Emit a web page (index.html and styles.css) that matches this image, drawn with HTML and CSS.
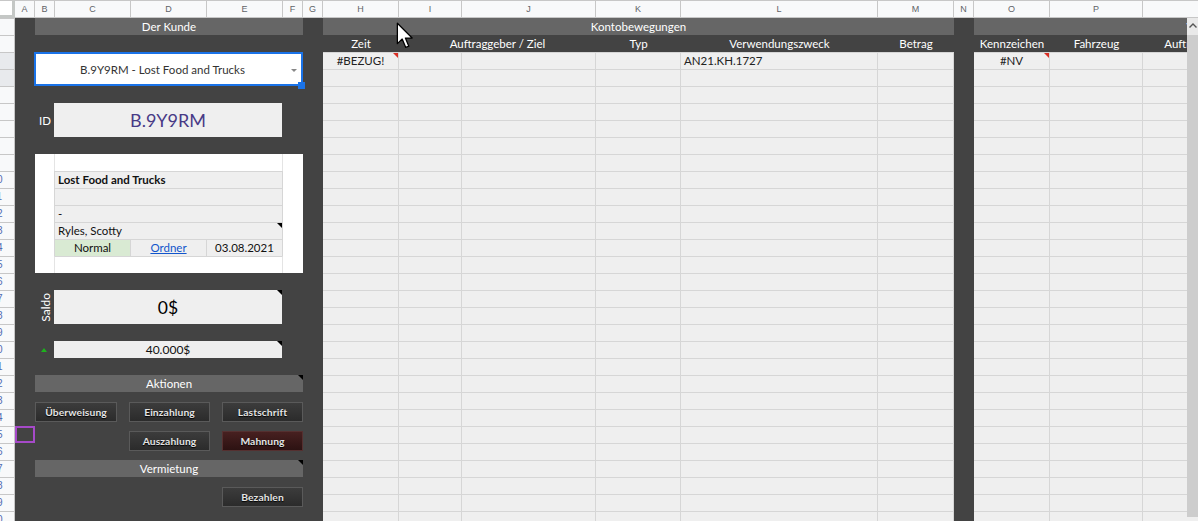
FILE: index.html
```html
<!DOCTYPE html>
<html lang="de">
<head>
    <meta charset="UTF-8">
    <meta name="viewport" content="width=device-width, initial-scale=1.0">
    <title>Kundenkonto</title>
    <link rel="stylesheet" href="styles.css">
</head>
<body>

<div class="sheet">
    <div class="corner"></div>

    <div class="colheads">
        <div class="ch w20">A</div>
        <div class="ch w20">B</div>
        <div class="ch w76">C</div>
        <div class="ch w76">D</div>
        <div class="ch w76">E</div>
        <div class="ch w20">F</div>
        <div class="ch w20">G</div>
        <div class="ch w76">H</div>
        <div class="ch w63">I</div>
        <div class="ch w134">J</div>
        <div class="ch w85">K</div>
        <div class="ch w197">L</div>
        <div class="ch w76">M</div>
        <div class="ch w20">N</div>
        <div class="ch w76">O</div>
        <div class="ch w93">P</div>
        <div class="ch w109"></div>
    </div>

    <div class="rowheads">
        <div class="rh"></div>
        <div class="rh"></div>
        <div class="rh sel"></div>
        <div class="rh sel"></div>
        <div class="rh"></div>
        <div class="rh"></div>
        <div class="rh"></div>
        <div class="rh"></div>
        <div class="rh"></div>
        <div class="rh"><span>10</span></div>
        <div class="rh"><span>11</span></div>
        <div class="rh"><span>12</span></div>
        <div class="rh"><span>13</span></div>
        <div class="rh"><span>14</span></div>
        <div class="rh"><span>15</span></div>
        <div class="rh"><span>16</span></div>
        <div class="rh"><span>17</span></div>
        <div class="rh"><span>18</span></div>
        <div class="rh"><span>19</span></div>
        <div class="rh"><span>20</span></div>
        <div class="rh"><span>21</span></div>
        <div class="rh"><span>22</span></div>
        <div class="rh"><span>23</span></div>
        <div class="rh"><span>24</span></div>
        <div class="rh"><span>25</span></div>
        <div class="rh"><span>26</span></div>
        <div class="rh"><span>27</span></div>
        <div class="rh"><span>28</span></div>
        <div class="rh"><span>29</span></div>
        <div class="rh"><span>30</span></div>
    </div>

    <div class="panel">
        <div class="bar bar-kunde">Der Kunde</div>

        <div class="picker">
            B.9Y9RM - Lost Food and Trucks
            <span class="picker-arrow"></span>
            <span class="handle"></span>
        </div>

        <div class="label label-id">ID</div>
        <div class="idbox">B.9Y9RM</div>

        <div class="card">
            <div class="card-gap"></div>
            <div class="card-row bold">Lost Food and Trucks</div>
            <div class="card-row"></div>
            <div class="card-row">-</div>
            <div class="card-row note">Ryles, Scotty</div>
            <div class="card-cell first status">Normal</div>
            <div class="card-cell"><a href="#">Ordner</a></div>
            <div class="card-cell">03.08.2021</div>
            <div class="card-gap last"></div>
        </div>

        <div class="label label-saldo"><span>Saldo</span></div>
        <div class="saldo note">0$</div>

        <div class="trend"></div>
        <div class="limit note">40.000$</div>

        <div class="bar bar-aktionen note">Aktionen</div>
        <div class="btn-row btn-row-1">
            <button class="btn wide">Überweisung</button>
            <button class="btn">Einzahlung</button>
            <button class="btn">Lastschrift</button>
        </div>
        <div class="peer-cursor"></div>
        <div class="btn-row btn-row-2">
            <button class="btn">Auszahlung</button>
            <button class="btn danger">Mahnung</button>
        </div>

        <div class="bar bar-miete note">Vermietung</div>
        <div class="btn-row btn-row-3">
            <button class="btn">Bezahlen</button>
        </div>
    </div>

    <section class="block moves">
        <div class="block-title">Kontobewegungen</div>
        <div class="head">Zeit</div>
        <div class="head span2">Auftraggeber / Ziel</div>
        <div class="head">Typ</div>
        <div class="head">Verwendungszweck</div>
        <div class="head">Betrag</div>
        <div class="cell center err">#BEZUG!</div>
        <div class="cell"></div>
        <div class="cell"></div>
        <div class="cell"></div>
        <div class="cell">AN21.KH.1727</div>
        <div class="cell"></div>
        <div class="fill"></div>
        <div class="fill"></div>
        <div class="fill"></div>
        <div class="fill"></div>
        <div class="fill"></div>
        <div class="fill"></div>
    </section>

    <div class="gutter"></div>

    <section class="block rentals">
        <div class="block-title">Vermietungen</div>
        <div class="head">Kennzeichen</div>
        <div class="head">Fahrzeug</div>
        <div class="head">Auftraggeber</div>
        <div class="head">Beginn</div>
        <div class="head">Ende</div>
        <div class="cell center err">#NV</div>
        <div class="cell"></div>
        <div class="cell"></div>
        <div class="cell"></div>
        <div class="cell"></div>
        <div class="fill"></div>
        <div class="fill"></div>
        <div class="fill"></div>
        <div class="fill"></div>
        <div class="fill"></div>
    </section>
</div>

<div class="scrollbar">
    <span class="scroll-up">
        <svg width="11" height="17" viewBox="0 0 11 17"><path d="M2.5 9.5 L6 6 L9.5 9.5" fill="none" stroke="#555" stroke-width="1.4"/></svg>
    </span>
</div>

<svg class="pointer" width="18" height="28" viewBox="0 0 14 22">
    <path d="M1 1 L1 17 L4.8 13.4 L7.6 20 L10 19 L7.3 12.6 L12.6 12.6 Z" fill="#fff" stroke="#000" stroke-width="1" stroke-linejoin="round"/>
</svg>

</body>
</html>
```

FILE: styles.css
```css
* {
    box-sizing: border-box;
}

body {
    margin: 0;
    width: 1198px;
    height: 521px;
    overflow: hidden;
    position: relative;
    background-color: #fff;
    font-family: 'Lato', 'Open Sans', sans-serif;
    color: #222;
}

.sheet {
    display: grid;
    grid-template-columns: 15px 308px 631px 20px 496px;
    grid-template-rows: 18px 503px;
}

/* headers */

.corner {
    background-color: #fff;
    border-top: 1px solid #c7c7c7;
    border-right: 3px solid #c4c7c5;
    border-bottom: 3px solid #c4c7c5;
}

.colheads {
    display: flex;
    grid-column: 2 / -1;
}

.ch {
    flex: none;
    height: 18px;
    background-color: #f8f9fa;
    border-top: 1px solid #c7c7c7;
    border-right: 1px solid #c7c7c7;
    border-bottom: 1px solid #c7c7c7;
    font: 9px 'Liberation Sans', Arial, sans-serif;
    line-height: 16px;
    color: #5f6368;
    text-align: center;
}

.w20 { width: 20px; }
.w63 { width: 63px; }
.w76 { width: 76px; }
.w85 { width: 85px; }
.w93 { width: 93px; }
.w109 { width: 109px; }
.w134 { width: 134px; }
.w197 { width: 197px; }

.rowheads {
    display: flex;
    flex-direction: column;
    overflow: hidden;
}

.rh {
    flex: none;
    height: 17px;
    background-color: #f8f9fa;
    border-top: 1px solid #c7c7c7;
    border-right: 1px solid #c7c7c7;
    overflow: hidden;
}

.rh.sel {
    background-color: #e8eaed;
}

.rh span {
    display: block;
    width: 40px;
    margin-left: -23px;
    text-align: center;
    font: 10px 'Liberation Sans', Arial, sans-serif;
    line-height: 16px;
    color: #4f6bb3;
}

/* left panel */

.panel {
    background-color: #434343;
    display: grid;
    grid-template-columns: 20px 20px 76px 76px 76px 20px 20px;
    grid-template-rows: repeat(30, 17px);
    overflow: hidden;
}

.bar {
    grid-column: 2 / 7;
    background-color: #666;
    color: #fff;
    font-size: 11.5px;
    line-height: 17px;
    text-align: center;
    position: relative;
}

.bar-kunde { grid-row: 1; }
.bar-aktionen { grid-row: 22; }
.bar-miete { grid-row: 27; }

.picker {
    grid-column: 2 / 7;
    grid-row: 3 / 5;
    margin-left: -1px;
    background-color: #fff;
    border: 2px solid #1a73e8;
    display: flex;
    align-items: center;
    justify-content: center;
    padding-right: 12px;
    font-size: 11.5px;
    color: #333;
    position: relative;
}

.picker-arrow {
    position: absolute;
    right: 4px;
    top: 15px;
    border-left: 3px solid transparent;
    border-right: 3px solid transparent;
    border-top: 3px solid #888;
}

.handle {
    position: absolute;
    right: -4px;
    bottom: -5px;
    width: 7px;
    height: 7px;
    background-color: #1a73e8;
}

.label {
    grid-column: 2;
    display: flex;
    align-items: center;
    justify-content: center;
    color: #fff;
    font-size: 11.5px;
}

.label-id { grid-row: 6 / 8; }
.label-saldo { grid-row: 17 / 19; }

.label-saldo span {
    writing-mode: vertical-rl;
    transform: rotate(180deg);
    font-size: 12px;
}

.idbox,
.saldo,
.limit {
    grid-column: 3 / 6;
    margin: 0 1px 0 -1px;
    background-color: #efefef;
    display: flex;
    align-items: center;
    justify-content: center;
    position: relative;
}

.idbox {
    grid-row: 6 / 8;
    font-size: 18px;
    color: #483a86;
}

.saldo {
    grid-row: 17 / 19;
    font-size: 17.5px;
    color: #000;
}

.limit {
    grid-row: 20;
    font-size: 12px;
    color: #111;
}

.trend {
    grid-column: 2;
    grid-row: 20;
    display: flex;
    align-items: center;
    justify-content: center;
    padding-right: 2px;
}

.trend::before {
    content: '';
    border-left: 3px solid transparent;
    border-right: 3px solid transparent;
    border-bottom: 4px solid #1db31d;
}

/* customer card */

.card {
    grid-column: 2 / 7;
    grid-row: 9 / 16;
    background-color: #fff;
    display: grid;
    grid-template-columns: 20px 76px 76px 76px 20px;
    grid-template-rows: repeat(7, 17px);
    font-size: 11.5px;
    color: #111;
}

.card-gap {
    grid-column: 2 / 5;
    margin-left: -1px;
    border-left: 1px solid #e4e4e4;
    border-right: 1px solid #e4e4e4;
}

.card-gap.last {
    border-top: 1px solid #d6d6d6;
}

.card-row {
    grid-column: 2 / 5;
    margin-left: -1px;
    background-color: #efefef;
    border-top: 1px solid #d6d6d6;
    border-left: 1px solid #d6d6d6;
    border-right: 1px solid #d6d6d6;
    padding-left: 3px;
    line-height: 16px;
    position: relative;
}

.card-row.bold {
    font-weight: bold;
}

.card-cell {
    background-color: #efefef;
    border-top: 1px solid #d6d6d6;
    border-right: 1px solid #d6d6d6;
    text-align: center;
    line-height: 16px;
}

.card-cell.first {
    grid-column: 2;
    margin-left: -1px;
    border-left: 1px solid #d6d6d6;
}

.card-cell.status {
    background-color: #d9ead3;
}

.card-cell a {
    color: #1155cc;
}

/* buttons */

.btn-row {
    grid-column: 2 / 7;
    display: flex;
    align-items: flex-start;
}

.btn-row-1 {
    grid-row: 23 / 25;
    padding-top: 10px;
    justify-content: space-between;
}

.btn-row-2 {
    grid-row: 25 / 27;
    padding-top: 5px;
    justify-content: flex-end;
    gap: 12px;
}

.btn-row-3 {
    grid-row: 28 / 30;
    padding-top: 10px;
    justify-content: flex-end;
}

.btn {
    width: 81px;
    height: 20px;
    padding: 0;
    border: 1px solid #5a5a5a;
    background: linear-gradient(#3c3c3c, #2b2b2b);
    color: #e4e4e4;
    font-family: 'Lato', 'Open Sans', sans-serif;
    font-weight: bold;
    font-size: 10.3px;
    letter-spacing: 0.1px;
    text-shadow: 0 1px 1px #000;
}

.btn.wide {
    width: 82px;
}

.btn.danger {
    border-color: #553030;
    background: linear-gradient(#472020, #2c1212);
}

.peer-cursor {
    grid-column: 1;
    grid-row: 25;
    border: 2px solid #a64ac9;
}

/* notes */

.note::after,
.err::after {
    content: '';
    position: absolute;
    top: 0;
    right: 0;
    border-left: 5px solid transparent;
    border-top: 5px solid #000;
}

.err::after {
    border-top-color: #d93025;
}

/* right blocks */

.block {
    display: grid;
    grid-template-rows: 17px 17px 17px 1fr;
    overflow: hidden;
}

.moves {
    grid-template-columns: 76px 63px 134px 85px 197px 76px;
}

.rentals {
    grid-template-columns: 76px 93px 109px 109px 109px;
}

.block-title {
    grid-column: 1 / -1;
    background-color: #666;
    color: #fff;
    font-size: 11.5px;
    line-height: 17px;
    text-align: center;
}

.head {
    background-color: #434343;
    color: #fff;
    font-size: 11.5px;
    line-height: 17px;
    text-align: center;
    white-space: nowrap;
}

.span2 {
    grid-column: span 2;
}

.cell {
    background-color: #efefef;
    border-top: 1px solid #d6d6d6;
    border-right: 1px solid #d6d6d6;
    padding: 0 3px;
    font-size: 11.5px;
    line-height: 15px;
    color: #222;
    white-space: nowrap;
    position: relative;
}

.cell.center {
    text-align: center;
}

.fill {
    border-right: 1px solid #d6d6d6;
    background: repeating-linear-gradient(#d6d6d6 0 1px, #efefef 1px 17px);
}

.gutter {
    background-color: #434343;
}

/* overlays */

.scrollbar {
    position: absolute;
    left: 1187px;
    top: 18px;
    width: 11px;
    height: 499px;
    background-color: #cdcdcd;
}

.scroll-up {
    display: block;
    height: 17px;
    background-color: #e9e9e9;
}

.scroll-up svg {
    display: block;
}

.pointer {
    position: absolute;
    left: 396px;
    top: 22px;
}
```
